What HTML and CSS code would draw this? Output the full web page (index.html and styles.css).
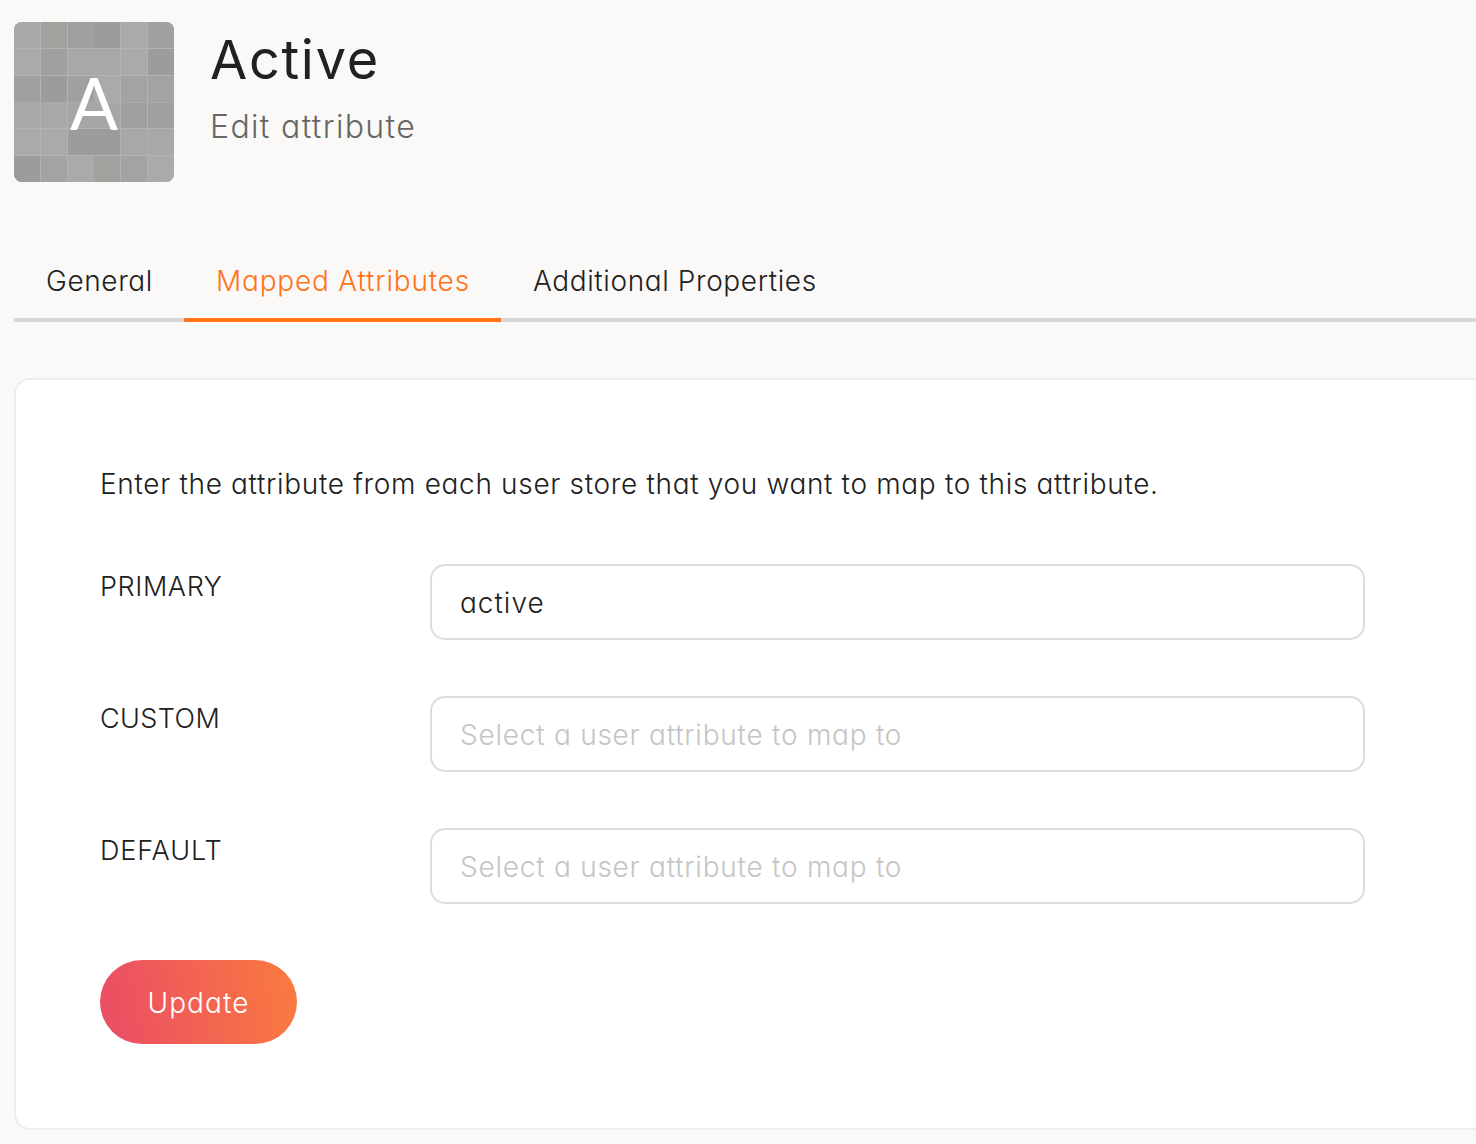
FILE: index.html
```
<!DOCTYPE html>
<html lang="en">
<head>
<meta charset="utf-8">
<title>Edit attribute</title>
<link rel="stylesheet" href="styles.css">
</head>
<body>
<header class="header">
  <div class="avatar">
    <svg class="tiles" viewBox="0 0 160 160" aria-hidden="true">
      <rect width="160" height="160" fill="#a6a6a6"/>
      <g shape-rendering="crispEdges">
      <path fill="#9c9c9c" d="M80 0h27v27H80zM134 27h26v27h-26zM27 54h26v26H27zM53 107h54v27H53zM0 134h27v26H0z"/>
      <path fill="#a0a0a0" d="M53 0h27v27H53zM134 0h26v27h-26zM27 27h26v27H27zM0 54h27v26H0zM53 54h27v26H53zM107 80h53v27h-53z"/>
      <path fill="#a1a19e" d="M27 0h26v27H27zM80 134h27v26H80z"/>
      <path fill="#aaaaaa" d="M107 0h27v27h-27zM0 27h27v27H0zM107 27h27v27h-27zM80 54h27v26H80zM27 107h26v27H27zM0 107h27v27H0zM53 134h27v26H53zM134 134h26v26h-26z"/>
      <path fill="#a3a3a3" d="M107 54h53v26h-53zM27 134h26v26H27zM107 134h27v26h-27z"/>
      <path fill="#a8a8a8" d="M0 0h27v27H0zM53 27h54v27H53zM0 80h53v27H0zM107 107h53v27h-53z"/>
      </g>
      <path fill="none" stroke="#b3b3b3" d="M26.5 0v160M53.5 0v160M106.5 0v160M133.5 0v160M0 26.5h160M0 53.5h160M0 106.5h160M0 133.5h160"/>
      <path fill="none" stroke="#acacac" d="M79.5 80v27M0 80.5h160"/>
    </svg>
    <span class="initial">A</span>
  </div>
  <div class="heading">
    <h1 class="title">Active</h1>
    <div class="subtitle">Edit attribute</div>
  </div>
</header>
<nav class="tabs">
  <a class="tab tab-general">General</a>
  <a class="tab tab-mapped active">Mapped Attributes</a>
  <a class="tab tab-additional">Additional Properties</a>
</nav>
<main class="card">
  <p class="intro">Enter the attribute from each user store that you want to map to this attribute.</p>
  <form class="form">
    <div class="row"><label class="label primary" for="primary">PRIMARY</label><input class="field value" id="primary" value="active"></div>
    <div class="row"><label class="label custom" for="custom">CUSTOM</label><input class="field" id="custom" placeholder="Select a user attribute to map to"></div>
    <div class="row"><label class="label default" for="default">DEFAULT</label><input class="field" id="default" placeholder="Select a user attribute to map to"></div>
    <button class="update" type="button">Update</button>
  </form>
</main>
</body>
</html>
```
FILE: styles.css
```
* { box-sizing: border-box; }
body {
  margin: 0;
  height: 1144px;
  padding: 22px 0 0 14px;
  overflow: hidden;
  background: #faf9f8;
  color: #212121;
  font: 300 28px/40px Inter, "Open Sans", sans-serif;
  font-feature-settings: "cv11";
}
.header { display: flex; gap: 36px; height: 222px; }
.avatar {
  position: relative;
  width: 160px;
  height: 160px;
  border-radius: 8px;
  overflow: hidden;
}
.tiles { display: block; width: 160px; height: 160px; }
.initial {
  position: absolute;
  inset: 0;
  color: #fff;
  font: 400 71px/161px Lato, sans-serif;
  text-align: center;
}
.title { margin: 6px 0 0; font-size: 54px; font-weight: 400; line-height: 64px; letter-spacing: 1.7px; white-space: nowrap; }
.subtitle { margin-top: 15px; color: #666; font-size: 32px; line-height: 40px; letter-spacing: 1.35px; white-space: nowrap; }
.tabs { display: flex; width: 1462px; height: 78px; border-bottom: 4px solid #d8d8d8; }
.tab { height: 78px; padding: 0 32px; line-height: 75px; letter-spacing: .6px; white-space: nowrap; }
.tab-general { width: 170px; }
.tab-mapped { width: 317px; letter-spacing: .8px; }
.tab.active { border-bottom: 4px solid #ff7419; color: #ff7419; }
.card {
  width: 1500px;
  height: 752px;
  margin-top: 56px;
  padding: 84px;
  border: 2px solid #ededee;
  border-radius: 16px;
  background: #fff;
}
.intro { margin: 0 0 60px; letter-spacing: .67px; white-space: nowrap; }
.form { margin: 0; }
.row { display: flex; height: 76px; margin-bottom: 56px; }
.label { width: 330px; padding-top: 3px; font-size: 27px; }
.primary { letter-spacing: .6px; }
.custom { letter-spacing: .4px; }
.default { letter-spacing: .9px; }
.field {
  width: 935px;
  height: 76px;
  padding: 2px 28px 0;
  border: 2px solid #dcdcdd;
  border-radius: 15px;
  outline: 0;
  background: #fff;
  color: #212121;
  font: inherit;
  font-feature-settings: inherit;
  letter-spacing: .76px;
}
.value { letter-spacing: 1px; }
.field::placeholder { color: #c5c5c5; opacity: 1; }
.update {
  display: block;
  width: 197px;
  height: 84px;
  padding: 2px 0 0;
  border: 0;
  border-radius: 42px;
  background: linear-gradient(80deg, #eb4f63 8%, #fa7b3f 100%);
  color: #fff;
  font: inherit;
  font-feature-settings: inherit;
  letter-spacing: 1.1px;
}
```
